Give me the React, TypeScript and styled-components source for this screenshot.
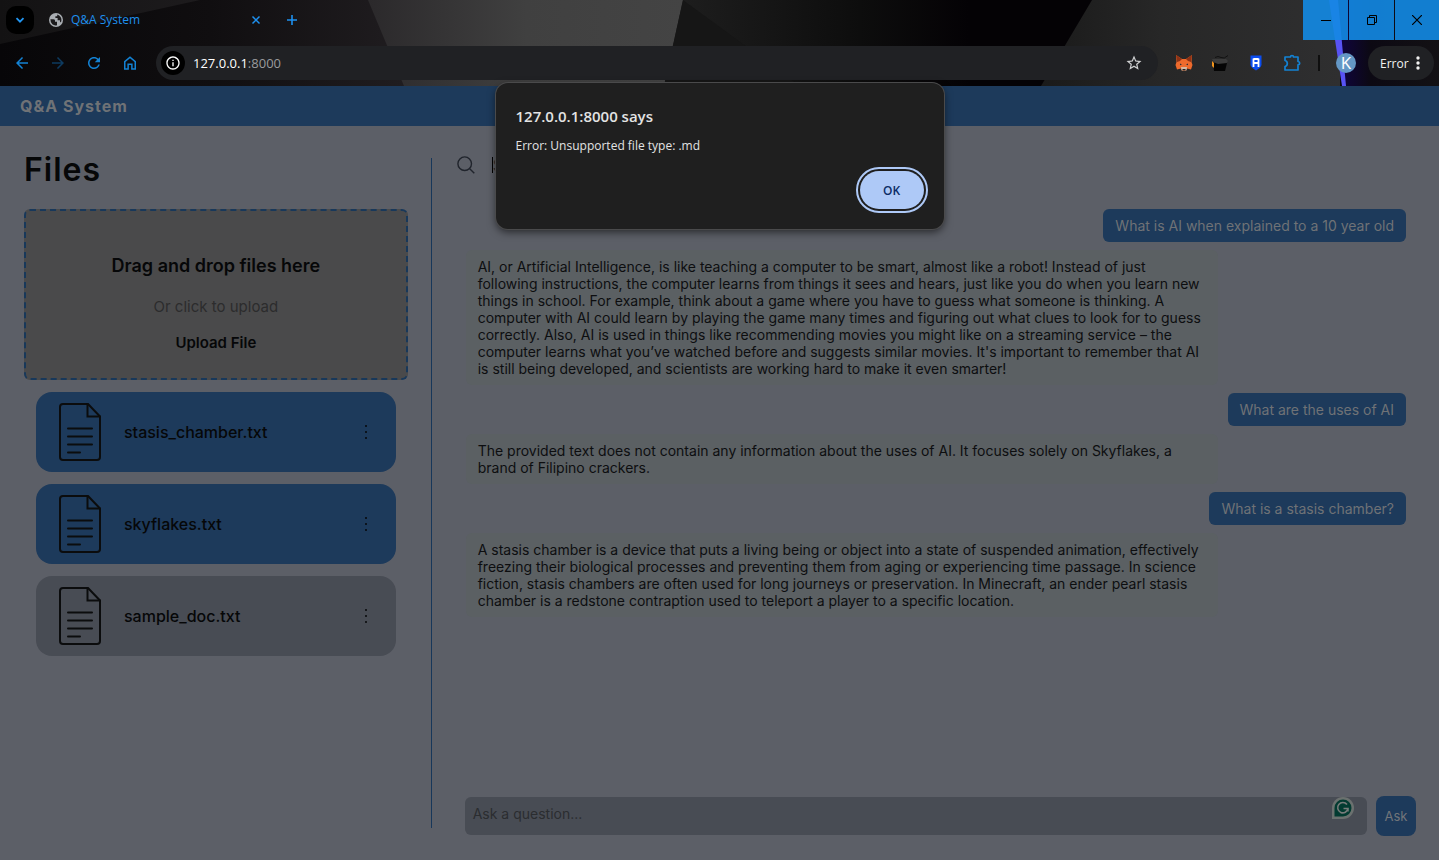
import React from "react";
import styled, { createGlobalStyle } from "styled-components";

const color = {
  page: "#5c5f67",
  brand: "#1d3a5b",
  brandLine: "#17375a",
  muted: "#484c54",
  drop: "#4a4a4b",
  accent: "#1382d4",
  onBrand: "#6f7276",
  ink: "#060708",
  chrome: "#202124",
};

const ui = `"Open Sans", "Noto Sans", sans-serif`;
const app = `Inter, "Liberation Sans", sans-serif`;

const GlobalStyle = createGlobalStyle`
  *, *::before, *::after { box-sizing: border-box; }
  body { margin: 0; background: ${color.page}; font-family: ${app}; color: ${color.ink}; }
  button, input, textarea { font: inherit; color: inherit; margin: 0; }
  button { cursor: pointer; }
  h1, h2, p, ul { margin: 0; padding: 0; }
`;

/* ---------- browser frame ---------- */

const Window = styled.div`
  display: flex;
  flex-direction: column;
  min-height: 100vh;
`;

const Chrome = styled.header`
  position: relative;
  background: #09080a;
  font-family: ${ui};
`;

const Backdrop = styled.svg`
  position: absolute;
  inset: 0;
  width: 100%;
  height: 100%;
`;

const TabStrip = styled.div`
  position: relative;
  display: flex;
  align-items: center;
  height: 40px;
  padding-left: 6px;
`;

const TabSearch = styled.button`
  display: grid;
  place-items: center;
  width: 28px;
  height: 28px;
  padding: 0;
  border: 0;
  border-radius: 10px;
  background: #000;
  color: #2196f3;
`;

const Tab = styled.div`
  display: flex;
  align-items: center;
  gap: 8px;
  width: 230px;
  padding-left: 15px;
  font-size: 12px;
  line-height: 20px;
  color: #1e90ef;

  span { flex: 1; }
`;

const PlainIconButton = styled.button<{ $size?: number; $tone?: string }>`
  display: grid;
  place-items: center;
  width: ${(p) => p.$size ?? 36}px;
  height: ${(p) => p.$size ?? 36}px;
  padding: 0;
  border: 0;
  background: none;
  color: ${(p) => p.$tone ?? color.accent};
`;

const WindowButtons = styled.div`
  display: grid;
  grid-template-columns: 45px 45px 44px;
  gap: 1px;
  margin-left: auto;
  align-self: stretch;
`;

const WindowButton = styled.button`
  display: grid;
  place-items: center;
  padding: 0;
  border: 0;
  background: rgba(19, 137, 228, 0.91);
  color: #000;
`;

const Toolbar = styled.div`
  position: relative;
  display: flex;
  align-items: center;
  height: 46px;
  padding: 0 5px 0 4px;
`;

const AddressBar = styled.div`
  display: flex;
  flex: 1;
  align-items: center;
  gap: 8px;
  height: 34px;
  margin: 0 8px;
  padding: 0 6px 0 5px;
  border-radius: 17px;
  background: ${color.chrome};
  font-size: 13px;
  line-height: 20px;
  color: #9a9b9d;
`;

const SiteInfo = styled.button`
  display: grid;
  place-items: center;
  width: 24px;
  height: 24px;
  padding: 0;
  border: 0;
  border-radius: 50%;
  background: #000;
  color: #fff;
`;

const Address = styled.span`
  flex: 1;
  b { font-weight: 400; color: #fff; }
`;

const Separator = styled.span`
  width: 2px;
  height: 16px;
  margin: 0 8px;
  background: #0f0f0f;
`;

const Avatar = styled.button`
  display: grid;
  place-items: center;
  width: 20px;
  height: 20px;
  margin: 0 12px 0 8px;
  padding: 0;
  border: 0;
  border-radius: 50%;
  background: #6497c5;
  color: #fff;
  font-size: 17px;
  line-height: 20px;
`;

const StatusChip = styled.button`
  display: flex;
  align-items: center;
  justify-content: space-between;
  width: 66px;
  height: 34px;
  padding: 0 14px 0 12px;
  border: 0;
  border-radius: 17px;
  background: ${color.chrome};
  color: #f2f2f2;
  font-size: 12px;
`;

/* ---------- alert ---------- */

const Alert = styled.div`
  position: absolute;
  top: 83px;
  left: 50%;
  z-index: 2;
  width: 448px;
  margin-left: -224px;
  padding: 22px 20px 20px;
  border-radius: 12px;
  background: #1f1f1f;
  box-shadow: 0 0 0 1px #4a4a4b, 0 3px 8px rgba(0, 0, 0, 0.6);
  font-family: ${ui};
  color: #e3e3e3;

  h2 { font-size: 15px; font-weight: 600; line-height: 22px; }
  p { margin-top: 9px; font-size: 12px; line-height: 20px; }
`;

const OkButton = styled.button`
  display: block;
  width: 64px;
  height: 38px;
  margin: 15px 0 0 auto;
  border: 0;
  border-radius: 19px;
  background: #aec9f7;
  color: #0b2c66;
  font-size: 12px;
  font-weight: 600;
  outline: 2px solid #aec9f7;
  outline-offset: 2px;
`;

/* ---------- page ---------- */

const Banner = styled.div`
  height: 40px;
  padding: 0 20px;
  background: ${color.brand};
  color: ${color.onBrand};
  font-size: 16px;
  font-weight: 700;
  letter-spacing: 1px;
  line-height: 40px;
`;

const Main = styled.main`
  display: flex;
  flex: 1;
`;

const Sidebar = styled.aside`
  flex: 0 0 30%;
  margin: 32px 0;
  padding: 0 23px 0 24px;
  border-right: 1px solid ${color.brandLine};

  h1 {
    font-size: 32px;
    font-weight: 600;
    letter-spacing: 1px;
    line-height: 24px;
  }
`;

const DropZone = styled.section`
  display: flex;
  flex-direction: column;
  align-items: center;
  height: 171px;
  margin-top: 27px;
  padding-top: 44px;
  border: 2px dashed #18385a;
  border-radius: 6px;
  background: ${color.drop};

  h2 { font-size: 18px; font-weight: 600; line-height: 22px; }
  p { margin-top: 20px; font-size: 15px; line-height: 20px; color: #2c2c2d; }
  label { margin-top: 16px; font-size: 15px; font-weight: 600; line-height: 20px; cursor: pointer; }
  input { display: none; }
`;

const FileList = styled.ul`
  display: flex;
  flex-direction: column;
  gap: 12px;
  margin-top: 12px;
  padding: 0 12px;
  list-style: none;
`;

const FileCard = styled.li<{ $selected: boolean }>`
  display: flex;
  align-items: center;
  gap: 22px;
  height: 80px;
  padding: 0 12px 0 22px;
  border-radius: 16px;
  background: ${(p) => (p.$selected ? color.brand : color.muted)};
  font-size: 16px;
  font-weight: 500;
  line-height: 20px;

  span { flex: 1; }
`;

const Chat = styled.section`
  display: flex;
  flex: 1;
  flex-direction: column;
  min-width: 0;
  padding: 24px 23px 24px 24px;
`;

const SearchRow = styled.label`
  display: flex;
  align-items: center;
  height: 30px;
  color: #20242c;
`;

const Caret = styled.span`
  width: 1px;
  height: 16px;
  margin-left: 16px;
  background: #000;
`;

const SearchInput = styled.input`
  flex: 1;
  min-width: 0;
  padding: 0;
  border: 0;
  outline: 0;
  background: none;
  font-size: 16px;

  &::placeholder { color: #2c2e31; opacity: 1; }
`;

const Messages = styled.div`
  display: flex;
  flex: 1;
  flex-direction: column;
  gap: 8px;
  margin-top: 29px;
  padding: 0 10px;
`;

const Message = styled.p<{ $mine: boolean }>`
  align-self: ${(p) => (p.$mine ? "flex-end" : "flex-start")};
  max-width: 80%;
  padding: 8px 12px;
  border-radius: 6px;
  background: ${(p) => (p.$mine ? color.brand : "#5b6063")};
  color: ${(p) => (p.$mine ? color.onBrand : "#0d0e10")};
  font-size: 14px;
  line-height: 17px;
`;

const AskForm = styled.form`
  display: flex;
  align-items: center;
  gap: 9px;
  padding-left: 9px;
`;

const AskField = styled.div`
  position: relative;
  display: flex;
  flex: 1;
`;

const AskBox = styled.textarea`
  flex: 1;
  height: 38px;
  padding: 8px;
  border: 0;
  border-radius: 6px;
  background: ${color.muted};
  font-size: 14px;
  line-height: 18px;
  resize: none;

  &::placeholder { color: #2b2d30; opacity: 1; }
`;

const WritingBadge = styled.svg`
  position: absolute;
  top: -1px;
  right: 12px;
`;

const AskButton = styled.button`
  width: 40px;
  height: 40px;
  padding: 0;
  border: 0;
  border-radius: 8px;
  background: ${color.brand};
  color: #72757a;
  font-size: 13px;
`;

/* ---------- drawings ---------- */

const Glyph = ({ d, size = 18 }: { d: string; size?: number }) => (
  <svg width={size} height={size} viewBox="0 0 24 24" fill="currentColor" aria-hidden="true">
    <path d={d} />
  </svg>
);

const BACK = "M20 11H7.83l5.59-5.59L12 4l-8 8 8 8 1.41-1.41L7.83 13H20v-2z";
const FORWARD = "M12 4l-1.41 1.41L16.17 11H4v2h12.17l-5.58 5.59L12 20l8-8z";
const RELOAD =
  "M17.65 6.35C16.2 4.9 14.21 4 12 4c-4.42 0-7.99 3.58-7.99 8s3.57 8 7.99 8c3.73 0 6.84-2.55 7.73-6h-2.08c-.82 2.33-3.04 4-5.65 4-3.31 0-6-2.69-6-6s2.69-6 6-6c1.66 0 3.14.69 4.22 1.78L13 11h7V4l-2.35 2.35z";
const HOME = "M4 21V9.5L12 3l8 6.5V21h-6.5v-6.5h-3V21H4zM6 19h2.5v-6.5h7V19H18v-8.5l-6-4.9-6 4.9V19z";
const STAR =
  "M22 9.24l-7.19-.62L12 2 9.19 8.63 2 9.24l5.46 4.73L5.82 21 12 17.27 18.18 21l-1.63-7.03L22 9.24zM12 15.4l-3.76 2.27 1-4.28-3.32-2.88 4.38-.38L12 6.1l1.71 4.04 4.38.38-3.32 2.88 1 4.28L12 15.4z";
const INFO =
  "M11 7h2v2h-2zm0 4h2v6h-2zm1-9C6.48 2 2 6.48 2 12s4.48 10 10 10 10-4.48 10-10S17.52 2 12 2zm0 18c-4.41 0-8-3.59-8-8s3.59-8 8-8 8 3.59 8 8-3.59 8-8 8z";

const ChromeArt = () => (
  <Backdrop viewBox="0 0 1439 86" preserveAspectRatio="none" aria-hidden="true">
    <defs>
      <linearGradient id="left" x1="0" x2="1">
        <stop offset="0" stopColor="#070608" />
        <stop offset="0.5" stopColor="#100e10" />
        <stop offset="1" stopColor="#211e21" />
      </linearGradient>
      <linearGradient id="leftUp" x1="0" x2="1">
        <stop offset="0" stopColor="#131213" />
        <stop offset="1" stopColor="#1d1b1d" />
      </linearGradient>
      <linearGradient id="plate" x1="0" x2="1">
        <stop offset="0" stopColor="#2b292b" />
        <stop offset="0.5" stopColor="#404040" />
        <stop offset="1" stopColor="#444" />
      </linearGradient>
      <linearGradient id="fade" x1="0" x2="1">
        <stop offset="0" stopColor="#1f1f1f" />
        <stop offset="0.45" stopColor="#0d0d0d" />
        <stop offset="0.7" stopColor="#040205" />
        <stop offset="1" stopColor="#040205" />
      </linearGradient>
      <linearGradient id="right" x1="0" x2="1">
        <stop offset="0" stopColor="#1a1a1a" />
        <stop offset="0.4" stopColor="#272727" />
        <stop offset="1" stopColor="#2f2f30" />
      </linearGradient>
      <linearGradient id="edge" x1="0" x2="1">
        <stop offset="0" stopColor="#100347" />
        <stop offset="0.35" stopColor="#0c0913" />
        <stop offset="1" stopColor="#131114" />
      </linearGradient>
    </defs>
    <rect width="420" height="86" fill="url(#left)" />
    <path d="M0 0H200L0 44z" fill="url(#leftUp)" />
    <path d="M368 0H684L664 86H404z" fill="url(#plate)" />
    <path d="M683 0H1100L1044 86H664z" fill="url(#fade)" />
    <path d="M683 0L800 86H664z" fill="#161616" />
    <path d="M1092 0H1340V86H1041z" fill="url(#right)" />
    <path d="M1334 0H1439V86H1343z" fill="url(#edge)" />
    <path d="M1329 0h9l8 86h-4z" fill="#5853f4" />
  </Backdrop>
);

const Globe = () => (
  <svg width="14" height="14" viewBox="0 0 14 14" aria-hidden="true">
    <circle cx="7" cy="7" r="7" fill="#a9adb2" />
    <path
      d="M1.4 6.2H4.2Q6 6.2 6 7.6V8.8H8V12.2Q5.500 13 3.300 11.300 1.400 9.600 1.400 6.200zM8.200 1.600V3.200H6.400V5H8.600V7.200H11V9.600L12.300 8.600Q13 4.500 10.200 2.500z"
      fill="#1b1a1c"
    />
  </svg>
);

const Fox = () => (
  <svg width="18" height="18" viewBox="0 0 18 18" aria-hidden="true">
    <path d="M1 1l6 4h4l6-4-.500 7 1 3-1.500 4.500L12 14.500 10.500 17h-3L6 14.500l-4 1L.500 11l1-3z" fill="#ee6a2c" />
    <path d="M1 1l6 4-2 2-3 1zM17 1l-6 4 2 2 3 1z" fill="#8e3215" />
    <path d="M5 9.500l2 1-2 .8zM13 9.500l-2 1 2 .8z" fill="#26303c" />
    <path d="M6 13h6l-.5 3.500H6.500z" fill="#d2b8a4" />
    <path d="M7.500 15h3v1.500h-3z" fill="#222" />
  </svg>
);

const Bag = () => (
  <svg width="18" height="18" viewBox="0 0 18 18" aria-hidden="true">
    <path d="M4 3.500q3-2 6 0t7-2" fill="none" stroke="#111" />
    <path d="M1 5h14l2 2-3 4H4z" fill="#3b3b3b" />
    <path d="M2 8l5 2 9-1-2 8H3z" fill="#050505" />
    <path d="M1 7l2 2v5l-2-2z" fill="#f0931c" />
  </svg>
);

const Shield = () => (
  <svg width="16" height="16" viewBox="0 0 16 16" aria-hidden="true">
    <path d="M2.500 .5h11v9.500Q13 12.500 8 15.500 3 12.500 2.500 10z" fill="#0b4df0" />
    <path d="M5.500 12V3.500M10.500 12V3.500M5.500 4H10.500M5.500 8h5" fill="none" stroke="#fff" strokeWidth="1.800" />
  </svg>
);

const Puzzle = () => (
  <svg width="18" height="18" viewBox="0 0 18 18" fill="none" stroke="currentColor" strokeWidth="1.700" aria-hidden="true">
    <path
      d="M2 3h5.500Q7.500 1.500 9 1.500T10.500 3H15v4.500Q16.700 7.700 16.700 9.200T15 10.800V16H2v-3.500Q4.300 12 4.300 9.500T2 6.500z"
      strokeLinejoin="round"
    />
  </svg>
);

const FileIcon = () => (
  <svg width="44" height="60" viewBox="0 0 44 60" fill="none" stroke="#0b0c0d" strokeWidth="2" strokeLinecap="round" aria-hidden="true">
    <path d="M30 2H5Q2 2 2 5V55Q2 58 5 58H39Q42 58 42 55V14.500z" strokeLinejoin="round" />
    <path d="M29.500 2V14.500H42" />
    <path d="M10 26.500H34M10 34.500H34M10 42.500H34M10 50.500H22" />
  </svg>
);

const KebabIcon = ({ gap, r }: { gap: number; r: number }) => (
  <svg width="4" height="20" viewBox="0 0 4 20" fill="currentColor" aria-hidden="true">
    <circle cx="2" cy={10 - gap} r={r} />
    <circle cx="2" cy="10" r={r} />
    <circle cx="2" cy={10 + gap} r={r} />
  </svg>
);

/* ---------- data ---------- */

const files = [
  { name: "stasis_chamber.txt", selected: true },
  { name: "skyflakes.txt", selected: true },
  { name: "sample_doc.txt", selected: false },
];

const messages = [
  { mine: true, text: "What is AI when explained to a 10 year old" },
  {
    mine: false,
    text: "AI, or Artificial Intelligence, is like teaching a computer to be smart, almost like a robot! Instead of just following instructions, the computer learns from things it sees and hears, just like you do when you learn new things in school. For example, think about a game where you have to guess what someone is thinking. A computer with AI could learn by playing the game many times and figuring out what clues to look for to guess correctly. Also, AI is used in things like recommending movies you might like on a streaming service – the computer learns what you’ve watched before and suggests similar movies. It's important to remember that AI is still being developed, and scientists are working hard to make it even smarter!",
  },
  { mine: true, text: "What are the uses of AI" },
  {
    mine: false,
    text: "The provided text does not contain any information about the uses of AI. It focuses solely on Skyflakes, a brand of Filipino crackers.",
  },
  { mine: true, text: "What is a stasis chamber?" },
  {
    mine: false,
    text: "A stasis chamber is a device that puts a living being or object into a state of suspended animation, effectively freezing their biological processes and preventing them from aging or experiencing time passage. In science fiction, stasis chambers are often used for long journeys or preservation. In Minecraft, an ender pearl stasis chamber is a redstone contraption used to teleport a player to a specific location.",
  },
];

const BrowserChrome = () => (
  <Chrome>
    <ChromeArt />
    <TabStrip>
      <TabSearch aria-label="Search tabs">
        <svg width="10" height="10" viewBox="0 0 10 10" fill="none" stroke="currentColor" strokeWidth="1.800" aria-hidden="true">
          <path d="M1.500 3.200L5 6.700l3.500-3.500" />
        </svg>
      </TabSearch>
      <Tab>
        <Globe />
        <span>Q&amp;A System</span>
        <PlainIconButton $size={16} $tone="#1e90ef" aria-label="Close tab">
          <svg width="10" height="10" viewBox="0 0 10 10" stroke="currentColor" strokeWidth="1.500" aria-hidden="true">
            <path d="M1.500 1.500l7 7M8.500 1.500l-7 7" />
          </svg>
        </PlainIconButton>
      </Tab>
      <PlainIconButton $size={56} $tone="#1e90ef" aria-label="New tab">
        <svg width="12" height="12" viewBox="0 0 12 12" stroke="currentColor" strokeWidth="1.600" aria-hidden="true">
          <path d="M6 1v10M1 6h10" />
        </svg>
      </PlainIconButton>
      <WindowButtons>
        <WindowButton aria-label="Minimize">
          <svg width="10" height="10" stroke="currentColor" aria-hidden="true"><path d="M0 5.500h10" /></svg>
        </WindowButton>
        <WindowButton aria-label="Restore">
          <svg width="10" height="10" fill="none" stroke="currentColor" aria-hidden="true">
            <path d="M.5 2.500h7v7h-7zM2.500 2.500v-2h7v7h-2" />
          </svg>
        </WindowButton>
        <WindowButton aria-label="Close">
          <svg width="10" height="10" stroke="currentColor" strokeWidth="1.200" aria-hidden="true">
            <path d="M0 0l10 10M10 0L0 10" />
          </svg>
        </WindowButton>
      </WindowButtons>
    </TabStrip>
    <Toolbar>
      <PlainIconButton aria-label="Back"><Glyph d={BACK} /></PlainIconButton>
      <PlainIconButton $tone="#0d3a5f" aria-label="Forward"><Glyph d={FORWARD} /></PlainIconButton>
      <PlainIconButton aria-label="Reload"><Glyph d={RELOAD} /></PlainIconButton>
      <PlainIconButton aria-label="Home"><Glyph d={HOME} /></PlainIconButton>
      <AddressBar>
        <SiteInfo aria-label="Site information"><Glyph d={INFO} size={16} /></SiteInfo>
        <Address><b>127.0.0.1</b>:8000</Address>
        <PlainIconButton $tone="#d0d1d2" aria-label="Bookmark"><Glyph d={STAR} /></PlainIconButton>
      </AddressBar>
      <PlainIconButton aria-label="Wallet"><Fox /></PlainIconButton>
      <PlainIconButton aria-label="Coupons"><Bag /></PlainIconButton>
      <PlainIconButton aria-label="Password manager"><Shield /></PlainIconButton>
      <PlainIconButton aria-label="Extensions"><Puzzle /></PlainIconButton>
      <Separator />
      <Avatar>K</Avatar>
      <StatusChip>
        Error
        <svg width="4" height="16" fill="currentColor" aria-hidden="true">
          <circle cx="2" cy="3" r="1.700" />
          <circle cx="2" cy="8" r="1.700" />
          <circle cx="2" cy="13" r="1.700" />
        </svg>
      </StatusChip>
    </Toolbar>
  </Chrome>
);

export default function App() {
  return (
    <Window>
      <GlobalStyle />
      <BrowserChrome />
      <Alert role="alertdialog" aria-labelledby="alert-title" aria-describedby="alert-text">
        <h2 id="alert-title">127.0.0.1:8000 says</h2>
        <p id="alert-text">Error: Unsupported file type: .md</p>
        <OkButton>OK</OkButton>
      </Alert>
      <Banner>Q&amp;A System</Banner>
      <Main>
        <Sidebar>
          <h1>Files</h1>
          <DropZone>
            <h2>Drag and drop files here</h2>
            <p>Or click to upload</p>
            <label htmlFor="upload">Upload File</label>
            <input id="upload" type="file" />
          </DropZone>
          <FileList>
            {files.map((file) => (
              <FileCard key={file.name} $selected={file.selected}>
                <FileIcon />
                <span>{file.name}</span>
                <PlainIconButton $tone={color.ink} aria-label={`Options for ${file.name}`}>
                  <KebabIcon gap={6} r={1} />
                </PlainIconButton>
              </FileCard>
            ))}
          </FileList>
        </Sidebar>
        <Chat>
          <SearchRow>
            <svg width="20" height="20" viewBox="0 0 20 20" fill="none" stroke="currentColor" strokeWidth="1.400" aria-hidden="true">
              <circle cx="8.700" cy="8.700" r="6.800" />
              <path d="M13.700 13.700L18.300 18.300" />
            </svg>
            <Caret />
            <SearchInput type="text" placeholder="Search" aria-label="Search" />
          </SearchRow>
          <Messages>
            {messages.map((message) => (
              <Message key={message.text} $mine={message.mine}>{message.text}</Message>
            ))}
          </Messages>
          <AskForm onSubmit={(event) => event.preventDefault()}>
            <AskField>
              <AskBox placeholder="Ask a question..." aria-label="Ask a question" />
              <WritingBadge width="24" height="24" viewBox="0 0 24 24" aria-hidden="true">
                <path d="M1 23V12A11 11 0 1 1 12 23z" fill="#6b716f" />
                <path d="M3.500 20.500V12A8.500 8.500 0 1 1 12 20.500z" fill="#033b31" />
                <path d="M16 8.500A5.200 5.200 0 1 0 17 12.500H12.500M17 12.500V15.500" fill="none" stroke="#777b7a" strokeWidth="1.600" />
              </WritingBadge>
            </AskField>
            <AskButton type="submit">Ask</AskButton>
          </AskForm>
        </Chat>
      </Main>
    </Window>
  );
}
